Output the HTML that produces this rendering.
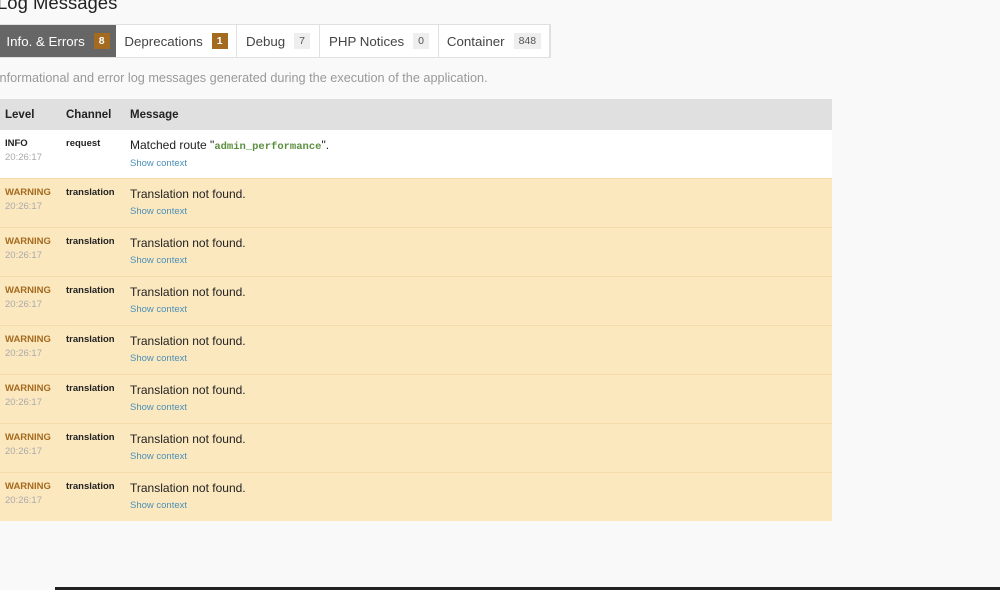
<!DOCTYPE html>
<html><head><style>
body{margin:0;width:1000px;height:590px;background:#f9f9f9;font-family:"Liberation Sans",Arial,sans-serif;overflow:hidden;position:relative;color:#222}
h2{position:absolute;left:-3px;top:-8px;margin:0;font-size:18.5px;font-weight:normal;color:#222}
.tabs{position:absolute;left:0;top:24px;height:32px;display:flex;border:1px solid #e0e0e0;border-left:0;background:#fff}
.tab{display:flex;align-items:center;justify-content:center;font-size:13.3px;color:#444;border-right:1px solid #e0e0e0;height:32px;box-sizing:border-box}
.tab.active{background:#666;color:#fff;border-right:0}
.b{display:inline-block;margin-left:9px;font-size:10.5px;padding:2px 5px;background:#eee;color:#555}
.b.o{background:#a46a1f;color:#fff;font-weight:bold}
.desc{position:absolute;left:-4px;top:71px;font-size:12.7px;color:#999}
table{position:absolute;left:0;top:99px;width:832px;border-collapse:collapse;font-size:11px;table-layout:fixed}
th{background:#e0e0e0;text-align:left;height:31px;padding:0 0 0 5px;font-size:11.5px;font-weight:bold;color:#222}
td{vertical-align:top;padding:8px 0 0 5px;height:40px;border-top:1px solid #f3dca9;overflow:hidden}
tr.w td{background:#fce8bf}
tr.i td{background:#fff;border-top:0}
.lv{font-weight:bold;font-size:9.5px;color:#222}
tr.w .lv{color:#a46a1f}
.t{color:#aaa;font-size:9.5px;margin-top:3px}
.ch{font-weight:bold;font-size:9.5px}
.m{font-size:12px;color:#222}
.sc{font-size:9.5px;color:#4a90b8;margin-top:5px}
code{font-family:"Liberation Mono",monospace;color:#5a8f3f;font-size:10.5px;font-weight:bold}
.bar{position:absolute;left:55px;right:0;top:587px;height:3px;background:#222}
</style></head><body>
<h2>Log Messages</h2>
<div class="tabs">
<div class="tab active" style="width:116px">Info. &amp; Errors <span class="b o">8</span></div>
<div class="tab" style="width:121px">Deprecations <span class="b o">1</span></div>
<div class="tab" style="width:83px">Debug <span class="b">7</span></div>
<div class="tab" style="width:119px">PHP Notices <span class="b">0</span></div>
<div class="tab" style="width:111px">Container <span class="b">848</span></div>
</div>
<div class="desc">Informational and error log messages generated during the execution of the application.</div>
<table>
<colgroup><col style="width:61px"><col style="width:64px"><col></colgroup>
<tr><th>Level</th><th>Channel</th><th>Message</th></tr>
<tr class="i"><td><div class="lv">INFO</div><div class="t">20:26:17</div></td><td class="ch">request</td><td><div class="m">Matched route "<code>admin_performance</code>".</div><div class="sc">Show context</div></td></tr>
<tr class="w"><td><div class="lv">WARNING</div><div class="t">20:26:17</div></td><td class="ch">translation</td><td><div class="m">Translation not found.</div><div class="sc">Show context</div></td></tr>
<tr class="w"><td><div class="lv">WARNING</div><div class="t">20:26:17</div></td><td class="ch">translation</td><td><div class="m">Translation not found.</div><div class="sc">Show context</div></td></tr>
<tr class="w"><td><div class="lv">WARNING</div><div class="t">20:26:17</div></td><td class="ch">translation</td><td><div class="m">Translation not found.</div><div class="sc">Show context</div></td></tr>
<tr class="w"><td><div class="lv">WARNING</div><div class="t">20:26:17</div></td><td class="ch">translation</td><td><div class="m">Translation not found.</div><div class="sc">Show context</div></td></tr>
<tr class="w"><td><div class="lv">WARNING</div><div class="t">20:26:17</div></td><td class="ch">translation</td><td><div class="m">Translation not found.</div><div class="sc">Show context</div></td></tr>
<tr class="w"><td><div class="lv">WARNING</div><div class="t">20:26:17</div></td><td class="ch">translation</td><td><div class="m">Translation not found.</div><div class="sc">Show context</div></td></tr>
<tr class="w"><td><div class="lv">WARNING</div><div class="t">20:26:17</div></td><td class="ch">translation</td><td><div class="m">Translation not found.</div><div class="sc">Show context</div></td></tr>
</table>
<div class="bar"></div>
</body></html>
